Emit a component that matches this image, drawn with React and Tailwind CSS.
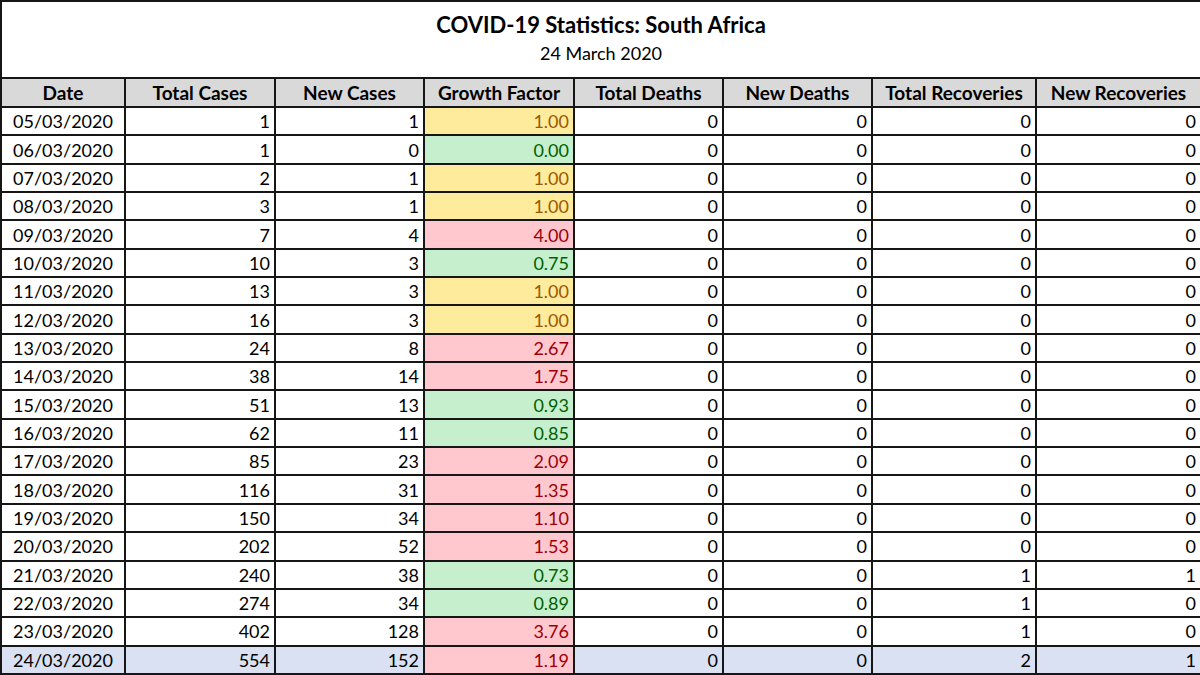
import React from "react";

const rows = [
  ["05/03/2020", 1, 1, "1.00", "y", 0, 0, 0, 0],
  ["06/03/2020", 1, 0, "0.00", "g", 0, 0, 0, 0],
  ["07/03/2020", 2, 1, "1.00", "y", 0, 0, 0, 0],
  ["08/03/2020", 3, 1, "1.00", "y", 0, 0, 0, 0],
  ["09/03/2020", 7, 4, "4.00", "r", 0, 0, 0, 0],
  ["10/03/2020", 10, 3, "0.75", "g", 0, 0, 0, 0],
  ["11/03/2020", 13, 3, "1.00", "y", 0, 0, 0, 0],
  ["12/03/2020", 16, 3, "1.00", "y", 0, 0, 0, 0],
  ["13/03/2020", 24, 8, "2.67", "r", 0, 0, 0, 0],
  ["14/03/2020", 38, 14, "1.75", "r", 0, 0, 0, 0],
  ["15/03/2020", 51, 13, "0.93", "g", 0, 0, 0, 0],
  ["16/03/2020", 62, 11, "0.85", "g", 0, 0, 0, 0],
  ["17/03/2020", 85, 23, "2.09", "r", 0, 0, 0, 0],
  ["18/03/2020", 116, 31, "1.35", "r", 0, 0, 0, 0],
  ["19/03/2020", 150, 34, "1.10", "r", 0, 0, 0, 0],
  ["20/03/2020", 202, 52, "1.53", "r", 0, 0, 0, 0],
  ["21/03/2020", 240, 38, "0.73", "g", 0, 0, 1, 1],
  ["22/03/2020", 274, 34, "0.89", "g", 0, 0, 1, 0],
  ["23/03/2020", 402, 128, "3.76", "r", 0, 0, 1, 0],
  ["24/03/2020", 554, 152, "1.19", "r", 0, 0, 2, 1],
];

const gfClass = {
  y: "bg-[#ffeb9c] text-[#9c5700]",
  g: "bg-[#c6efce] text-[#006100]",
  r: "bg-[#ffc7ce] text-[#9c0006]",
};

const headers = [
  "Date",
  "Total Cases",
  "New Cases",
  "Growth Factor",
  "Total Deaths",
  "New Deaths",
  "Total Recoveries",
  "New Recoveries",
];

const widths = ["w-[124px]", "w-[150px]", "w-[149px]", "w-[150px]", "w-[149px]", "w-[149px]", "w-[164px]", "w-[165px]"];

export default function App() {
  const cell = "border-2 border-[#161616] px-[4px] leading-none";
  return (
    <div
      className="w-[1200px] h-[675px] bg-white text-black overflow-hidden"
      style={{ fontFamily: "Lato, 'Open Sans', sans-serif" }}
    >
      <table className="table-fixed border-collapse w-[1200px]">
        <colgroup>
          {widths.map((w, i) => (
            <col key={i} className={w} />
          ))}
        </colgroup>
        <thead>
          <tr className="h-[77px]">
            <th colSpan={8} className="border-2 border-[#161616] align-top pt-[8px] font-normal">
              <div className="text-[22px] font-bold leading-[30px]">COVID-19 Statistics: South Africa</div>
              <div className="text-[18px] leading-[26px]">24 March 2020</div>
            </th>
          </tr>
          <tr className="h-[29px] bg-[#d9d9d9]">
            {headers.map((h) => (
              <th key={h} className={`${cell} text-center text-[19px] font-bold`}>
                {h}
              </th>
            ))}
          </tr>
        </thead>
        <tbody>
          {rows.map((r, i) => {
            const last = i === rows.length - 1;
            const bg = last ? "bg-[#d9e1f2]" : "bg-white";
            return (
              <tr key={r[0]} className="h-[28.35px] text-[18px]">
                <td className={`${cell} ${bg} text-center`}>{r[0]}</td>
                <td className={`${cell} ${bg} text-right`}>{r[1]}</td>
                <td className={`${cell} ${bg} text-right`}>{r[2]}</td>
                <td className={`${cell} ${gfClass[r[4]]} text-right`}>{r[3]}</td>
                <td className={`${cell} ${bg} text-right`}>{r[5]}</td>
                <td className={`${cell} ${bg} text-right`}>{r[6]}</td>
                <td className={`${cell} ${bg} text-right`}>{r[7]}</td>
                <td className={`${cell} ${bg} text-right`}>{r[8]}</td>
              </tr>
            );
          })}
        </tbody>
      </table>
    </div>
  );
}
